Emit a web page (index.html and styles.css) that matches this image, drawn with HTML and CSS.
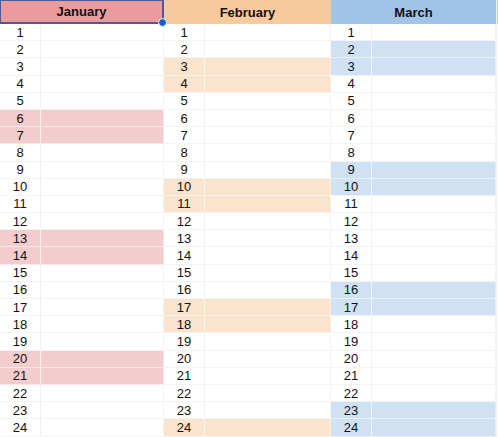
FILE: index.html
```html
<!DOCTYPE html>
<html>
<head>
<meta charset="utf-8">
<link rel="stylesheet" href="styles.css">
</head>
<body>
<div class="sheet">
  <div class="month jan">
    <div class="head selected">January<span class="handle"></span></div>
    <div class="row"><span class="n">1</span><span class="d"></span></div>
    <div class="row"><span class="n">2</span><span class="d"></span></div>
    <div class="row"><span class="n">3</span><span class="d"></span></div>
    <div class="row"><span class="n">4</span><span class="d"></span></div>
    <div class="row"><span class="n">5</span><span class="d"></span></div>
    <div class="row hl"><span class="n">6</span><span class="d"></span></div>
    <div class="row hl"><span class="n">7</span><span class="d"></span></div>
    <div class="row"><span class="n">8</span><span class="d"></span></div>
    <div class="row"><span class="n">9</span><span class="d"></span></div>
    <div class="row"><span class="n">10</span><span class="d"></span></div>
    <div class="row"><span class="n">11</span><span class="d"></span></div>
    <div class="row"><span class="n">12</span><span class="d"></span></div>
    <div class="row hl"><span class="n">13</span><span class="d"></span></div>
    <div class="row hl"><span class="n">14</span><span class="d"></span></div>
    <div class="row"><span class="n">15</span><span class="d"></span></div>
    <div class="row"><span class="n">16</span><span class="d"></span></div>
    <div class="row"><span class="n">17</span><span class="d"></span></div>
    <div class="row"><span class="n">18</span><span class="d"></span></div>
    <div class="row"><span class="n">19</span><span class="d"></span></div>
    <div class="row hl"><span class="n">20</span><span class="d"></span></div>
    <div class="row hl"><span class="n">21</span><span class="d"></span></div>
    <div class="row"><span class="n">22</span><span class="d"></span></div>
    <div class="row"><span class="n">23</span><span class="d"></span></div>
    <div class="row"><span class="n">24</span><span class="d"></span></div>
  </div>
  <div class="month feb">
    <div class="head">February</div>
    <div class="row"><span class="n">1</span><span class="d"></span></div>
    <div class="row"><span class="n">2</span><span class="d"></span></div>
    <div class="row hl"><span class="n">3</span><span class="d"></span></div>
    <div class="row hl"><span class="n">4</span><span class="d"></span></div>
    <div class="row"><span class="n">5</span><span class="d"></span></div>
    <div class="row"><span class="n">6</span><span class="d"></span></div>
    <div class="row"><span class="n">7</span><span class="d"></span></div>
    <div class="row"><span class="n">8</span><span class="d"></span></div>
    <div class="row"><span class="n">9</span><span class="d"></span></div>
    <div class="row hl"><span class="n">10</span><span class="d"></span></div>
    <div class="row hl"><span class="n">11</span><span class="d"></span></div>
    <div class="row"><span class="n">12</span><span class="d"></span></div>
    <div class="row"><span class="n">13</span><span class="d"></span></div>
    <div class="row"><span class="n">14</span><span class="d"></span></div>
    <div class="row"><span class="n">15</span><span class="d"></span></div>
    <div class="row"><span class="n">16</span><span class="d"></span></div>
    <div class="row hl"><span class="n">17</span><span class="d"></span></div>
    <div class="row hl"><span class="n">18</span><span class="d"></span></div>
    <div class="row"><span class="n">19</span><span class="d"></span></div>
    <div class="row"><span class="n">20</span><span class="d"></span></div>
    <div class="row"><span class="n">21</span><span class="d"></span></div>
    <div class="row"><span class="n">22</span><span class="d"></span></div>
    <div class="row"><span class="n">23</span><span class="d"></span></div>
    <div class="row hl"><span class="n">24</span><span class="d"></span></div>
  </div>
  <div class="month mar">
    <div class="head">March</div>
    <div class="row"><span class="n">1</span><span class="d"></span></div>
    <div class="row hl"><span class="n">2</span><span class="d"></span></div>
    <div class="row hl"><span class="n">3</span><span class="d"></span></div>
    <div class="row"><span class="n">4</span><span class="d"></span></div>
    <div class="row"><span class="n">5</span><span class="d"></span></div>
    <div class="row"><span class="n">6</span><span class="d"></span></div>
    <div class="row"><span class="n">7</span><span class="d"></span></div>
    <div class="row"><span class="n">8</span><span class="d"></span></div>
    <div class="row hl"><span class="n">9</span><span class="d"></span></div>
    <div class="row hl"><span class="n">10</span><span class="d"></span></div>
    <div class="row"><span class="n">11</span><span class="d"></span></div>
    <div class="row"><span class="n">12</span><span class="d"></span></div>
    <div class="row"><span class="n">13</span><span class="d"></span></div>
    <div class="row"><span class="n">14</span><span class="d"></span></div>
    <div class="row"><span class="n">15</span><span class="d"></span></div>
    <div class="row hl"><span class="n">16</span><span class="d"></span></div>
    <div class="row hl"><span class="n">17</span><span class="d"></span></div>
    <div class="row"><span class="n">18</span><span class="d"></span></div>
    <div class="row"><span class="n">19</span><span class="d"></span></div>
    <div class="row"><span class="n">20</span><span class="d"></span></div>
    <div class="row"><span class="n">21</span><span class="d"></span></div>
    <div class="row"><span class="n">22</span><span class="d"></span></div>
    <div class="row hl"><span class="n">23</span><span class="d"></span></div>
    <div class="row hl"><span class="n">24</span><span class="d"></span></div>
  </div>
  <div class="month apr">
    <div class="head"></div>
  </div>
</div>
</body>
</html>
```

FILE: styles.css
```css
html, body {
  margin: 0;
  padding: 0;
  background: #ffffff;
}
body {
  font-family: "Liberation Sans", Arial, sans-serif;
  font-size: 13px;
  color: #000;
  overflow: hidden;
}
.sheet {
  display: flex;
  width: 498px;
  height: 437px;
  overflow: hidden;
}
.month {
  display: flex;
  flex-direction: column;
  flex: none;
}
.jan { width: 164px; }
.feb { width: 167px; }
.mar { width: 165px; }
.apr { width: 10px; border-left: 1px solid #eeeeee; }

.head {
  position: relative;
  height: 24px;
  box-sizing: border-box;
  display: flex;
  align-items: center;
  justify-content: center;
  font-weight: bold;
  font-size: 13px;
  color: #111;
  flex: none;
}
.jan .head { background: #e99b9d; }
.feb .head { background: #f8ca9d; }
.mar .head { background: #a0c4e7; }
.apr .head { background: #b7dcb0; width: 2px; }

.head.selected {
  border: 2px solid #4a5a9c;
  border-left-width: 1px;
  border-top-width: 1px;
}
.handle {
  position: absolute;
  right: -5px;
  bottom: -5px;
  width: 7px;
  height: 7px;
  border-radius: 50%;
  background: #1f5fc4;
  border: 1px solid #ffffff;
  z-index: 2;
}

.row {
  display: grid;
  grid-template-columns: 41px 1fr;
  height: 17.2px;
  box-sizing: border-box;
  border-bottom: 1px solid #f4f4f4;
  flex: none;
}
.n {
  display: flex;
  align-items: center;
  justify-content: center;
  border-right: 1px solid #f1f1f1;
  line-height: 1;
  color: #111;
}
.d {
  border-right: 1px solid #f4f4f4;
}
.row.hl { border-bottom-color: rgba(255,255,255,0.55); }
.row.hl .n { border-right-color: rgba(255,255,255,0.7); }
.row.hl .d { border-right-color: rgba(255,255,255,0.4); }
.jan .row.hl { background: #f3cdcd; }
.feb .row.hl { background: #fbe4cd; }
.mar .row.hl { background: #cfe1f2; }
```
